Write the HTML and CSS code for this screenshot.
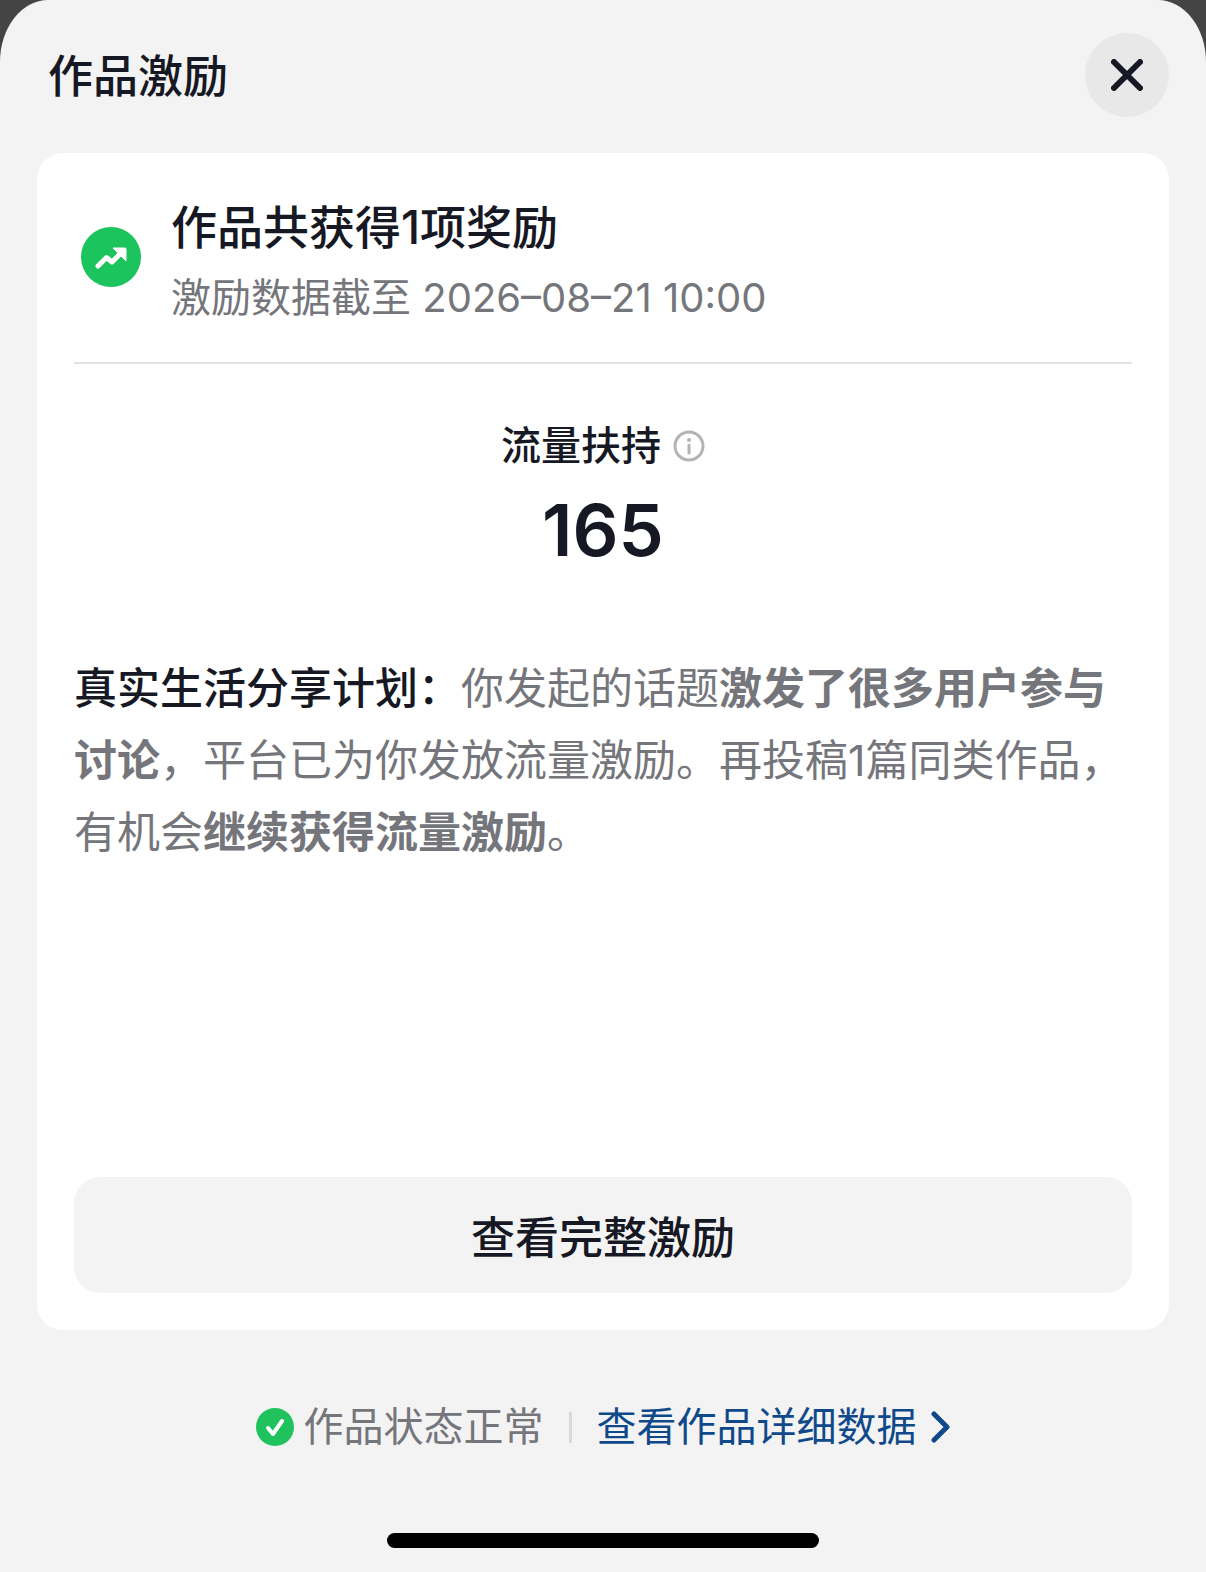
FILE: index.html
```html
<!DOCTYPE html>
<html lang="zh-CN">
<head>
    <meta charset="UTF-8">
    <meta name="viewport" content="width=device-width, initial-scale=1.0">
    <title>作品激励</title>
    <link rel="stylesheet" href="styles.css">
</head>
<body>
<div class="sheet">
    <header class="sheet-header">
        <h1>作品激励</h1>
        <button class="close-button" type="button" aria-label="关闭">
            <svg width="32" height="32" viewBox="0 0 32 32" fill="none" stroke="currentColor" stroke-width="6" stroke-linecap="round">
                <path d="M3 3L29 29M29 3L3 29"/>
            </svg>
        </button>
    </header>

    <main class="card">
        <section class="summary">
            <svg class="summary-icon" viewBox="0 0 60 60">
                <circle cx="30" cy="30" r="30" fill="#1bc45c"/>
                <path d="M17 39L25.500 30.500L31 35L40 26" fill="none" stroke="#fff" stroke-width="5" stroke-linecap="round" stroke-linejoin="round"/>
                <path d="M32 21H44Q45 21 45 22V34Z" fill="#fff" stroke="#fff" stroke-width="1" stroke-linejoin="round"/>
            </svg>
            <div>
                <h2>作品共获得1项奖励</h2>
                <p class="summary-date">激励数据截至 2026–08–21 10:00</p>
            </div>
        </section>

        <section class="metric">
            <div class="metric-label">
                <span>流量扶持</span>
                <button class="info-button" type="button" aria-label="流量扶持说明">
                    <svg width="32" height="32" viewBox="0 0 32 32" fill="none" stroke="currentColor">
                        <circle cx="16" cy="16" r="14" stroke-width="3"/>
                        <path d="M16 15V23" stroke-width="3" stroke-linecap="round"/>
                        <circle cx="16" cy="10" r="2" fill="currentColor" stroke="none"/>
                    </svg>
                </button>
            </div>
            <div class="metric-value">165</div>
        </section>

        <p class="description"><strong class="plan">真实生活分享计划：</strong>你发起的话题<strong>激发了很多用户参与讨论</strong>，平台已为你发放流量激励。再投稿1篇同类作品，有机会<strong>继续获得流量激励</strong>。</p>

        <button class="detail-button" type="button">查看完整激励</button>
    </main>

    <footer class="sheet-footer">
        <div class="status">
            <svg class="status-icon" viewBox="0 0 38 38">
                <circle cx="19" cy="19" r="19" fill="#1fc25d"/>
                <path d="M12 20L17 26L26 13" fill="none" stroke="#fff" stroke-width="4" stroke-linecap="round" stroke-linejoin="round"/>
            </svg>
            <span>作品状态正常</span>
        </div>
        <a class="data-link" href="#">
            查看作品详细数据
            <svg width="20" height="32" viewBox="0 0 20 32" fill="none" stroke="currentColor" stroke-width="5" stroke-linecap="round" stroke-linejoin="round">
                <path d="M3 3L16 16L3 29"/>
            </svg>
        </a>
    </footer>
    <div class="home-bar"></div>
</div>
</body>
</html>
```
FILE: styles.css
```css
* {
    box-sizing: border-box;
}

body {
    margin: 0;
    background-color: #444;
    color: #161823;
    font-family: Inter, "Noto Sans CJK SC", sans-serif;
}

h1, h2, p {
    margin: 0;
    font-weight: 500;
}

button {
    padding: 0;
    border: none;
    color: inherit;
    font-family: inherit;
    cursor: pointer;
}

svg {
    display: block;
    flex-shrink: 0;
}

.sheet {
    display: flex;
    flex-direction: column;
    min-height: 100vh;
    padding: 0 37px 24px;
    background-color: #f3f3f3;
    border-radius: 48px 48px 0 0 / 62px 62px 0 0;
}

.sheet-header {
    display: flex;
    align-items: center;
    justify-content: space-between;
    padding: 33px 0 36px 11px;
}

.sheet-header h1 {
    padding-top: 4px;
    font-size: 45px;
    line-height: 64px;
}

.close-button {
    display: flex;
    align-items: center;
    justify-content: center;
    width: 84px;
    height: 84px;
    border-radius: 50%;
    background-color: #e8e8e8;
}

.card {
    display: flex;
    flex: 1;
    flex-direction: column;
    padding: 37px;
    border-radius: 26px;
    background-color: #fff;
}

.summary {
    display: flex;
    gap: 30px;
    padding: 2px 0 28px 7px;
    border-bottom: 2px solid #e3e3e4;
}

.summary-icon {
    width: 60px;
    height: 60px;
    margin-top: 35px;
}

.summary h2 {
    font-size: 46px;
    line-height: 70px;
}

.summary-date {
    color: #75767b;
    font-size: 40px;
    font-weight: 400;
    line-height: 72px;
}

.metric {
    padding: 54px 0 80px;
    text-align: center;
}

.metric-label {
    display: flex;
    align-items: center;
    justify-content: center;
    gap: 12px;
    font-size: 40px;
    font-weight: 500;
    line-height: 56px;
}

.info-button {
    background: none;
    color: #b3b4b6;
}

.metric-value {
    margin-top: 14px;
    font-size: 72px;
    font-weight: 600;
    line-height: 84px;
}

.description {
    margin-bottom: 48px;
    color: #75767b;
    font-size: 43px;
    font-weight: 400;
    line-height: 72px;
}

.description strong {
    font-weight: 700;
}

.description .plan {
    color: #161823;
    font-weight: 500;
}

.detail-button {
    height: 116px;
    margin-top: auto;
    border-radius: 26px;
    background-color: #f3f3f3;
    font-size: 44px;
    font-weight: 500;
}

.sheet-footer {
    display: flex;
    align-items: center;
    justify-content: center;
    padding: 67px 0 76px;
    font-size: 40px;
    line-height: 60px;
}

.status {
    display: flex;
    align-items: center;
    gap: 10px;
    color: #75767b;
}

.status::after {
    content: "";
    width: 3px;
    height: 31px;
    margin: 0 25px 0 15px;
    background-color: #d9dadc;
}

.status-icon {
    width: 38px;
    height: 38px;
}

.data-link {
    display: flex;
    align-items: center;
    gap: 14px;
    color: #10498a;
    text-decoration: none;
}

.home-bar {
    width: 432px;
    max-width: 60%;
    height: 15px;
    margin: 0 auto;
    border-radius: 8px;
    background-color: #000;
}
```
